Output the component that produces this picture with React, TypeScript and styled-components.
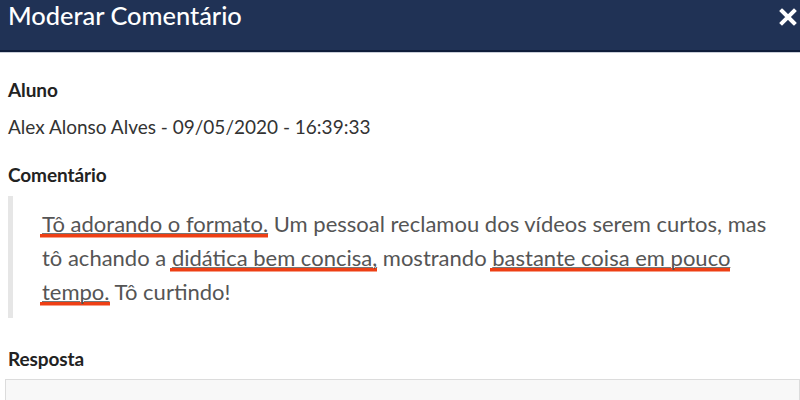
import React from "react";
import styled, { createGlobalStyle } from "styled-components";

const Global = createGlobalStyle`
  html, body { margin: 0; padding: 0; background: #fff; }
  body { font-family: Lato, "Open Sans", sans-serif; width: 800px; height: 400px; overflow: hidden; }
`;

const Modal = styled.div`
  width: 800px;
  height: 400px;
  display: flex;
  flex-direction: column;
  overflow: hidden;
`;

const Header = styled.div`
  height: 50px;
  background: #203255;
  border-bottom: 2px solid #0f1d3a;
  box-shadow: 0 1px 0 #c9ced8;
  display: flex;
  align-items: flex-start;
  justify-content: space-between;
  padding: 0 3px 0 8px;
  flex-shrink: 0;
`;

const Title = styled.h1`
  margin: 0;
  color: #fff;
  font-family: Lato, sans-serif;
  font-weight: 500;
  font-size: 25.4px;
  line-height: 31px;
`;

const Close = styled.button`
  border: none;
  background: none;
  padding: 0;
  margin-top: 8px;
  width: 18px;
  height: 18px;
  display: flex;
`;

const Body = styled.div`
  padding: 27px 0 0 8px;
  display: flex;
  flex-direction: column;
`;

const Label = styled.div<{ $mt?: number }>`
  font-weight: 700;
  font-size: 19px;
  line-height: 22px;
  color: #222;
  letter-spacing: -0.1px;
  margin-top: ${(p) => p.$mt ?? 0}px;
`;

const Value = styled.div`
  font-size: 19px;
  line-height: 22px;
  color: #333;
  margin-top: 15px;
`;

const Quote = styled.blockquote`
  margin: 10px 0 0 0;
  border-left: 5px solid #e6e6e6;
  padding: 11px 15px 9px 29px;
  font-size: 22px;
  line-height: 34px;
  color: #555;
`;

const Mark = styled.span`
  text-decoration: underline;
  text-decoration-thickness: 1px;
  text-underline-offset: 1px;
  text-decoration-color: #777;
  padding: 0 0 0.5px 2px;
  margin-left: -2px;
  background: linear-gradient(#ee3f14, #ee3f14) no-repeat left bottom / 100% 3.5px;
`;

const Input = styled.div`
  margin: 9px 0 0 -3px;
  height: 40px;
  border: 1px solid #dcdcdc;
  background: #f8f8f8;
`;

export default function App() {
  return (
    <>
      <Global />
      <Modal>
        <Header>
          <Title>Moderar Comentário</Title>
          <Close aria-label="Fechar">
            <svg width="18" height="18" viewBox="0 0 18 18">
              <path d="M3 3 L15 15 M15 3 L3 15" stroke="#fff" strokeWidth="4" strokeLinecap="square" />
            </svg>
          </Close>
        </Header>
        <Body>
          <Label>Aluno</Label>
          <Value>Alex Alonso Alves - 09/05/2020 - 16:39:33</Value>
          <Label $mt={26}>Comentário</Label>
          <Quote>
            <Mark>Tô adorando o formato.</Mark> Um pessoal reclamou dos vídeos serem curtos, mas tô achando a{" "}
            <Mark>didática bem concisa,</Mark> mostrando <Mark>bastante coisa em pouco </Mark>
            <Mark>tempo.</Mark> Tô curtindo!
          </Quote>
          <Label $mt={30}>Resposta</Label>
          <Input />
        </Body>
      </Modal>
    </>
  );
}
